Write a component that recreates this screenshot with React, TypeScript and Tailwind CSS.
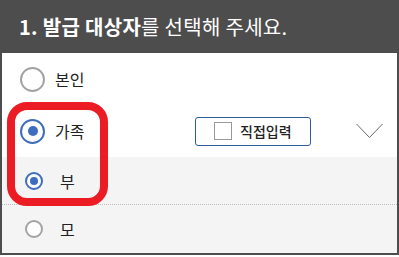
import { ReactNode } from "react";

const font = { fontFamily: '"Noto Sans CJK KR", "Noto Sans", sans-serif' };

function Radio({ size, checked }: { size: "lg" | "sm"; checked: boolean }) {
  const box = size === "lg" ? "w-[25px] h-[25px]" : "w-[18px] h-[18px]";
  const dot = size === "lg" ? "w-[10px] h-[10px]" : "w-[8px] h-[8px]";
  return (
    <span
      className={`${box} shrink-0 rounded-full border-2 bg-white flex items-center justify-center ${
        checked ? "border-[#3d6dbd]" : "border-[#a3a3a3]"
      }`}
    >
      {checked && <span className={`${dot} rounded-full bg-[#3d6dbd]`} />}
    </span>
  );
}

function SubRow({ label, checked, children }: { label: string; checked: boolean; children?: ReactNode }) {
  return (
    <div className="h-[47px] flex items-center pl-[23px] gap-[17px]">
      <Radio size="sm" checked={checked} />
      <span className="text-[16px] text-[#222]">{label}</span>
      {children}
    </div>
  );
}

export default function App() {
  return (
    <div className="w-[399px] h-[257px] bg-white relative" style={font}>
      <div className="w-[399px] border-2 border-[#4d4d4d] border-t-0">
        {/* Header */}
        <div className="h-[53px] bg-[#4d4d4d] flex items-center pl-[17px] text-white text-[20px] tracking-[0.3px]">
          <span className="font-bold">1. 발급 대상자</span>
          <span>를 선택해 주세요.</span>
        </div>

        {/* 본인 */}
        <div className="h-[52px] flex items-center pl-[18px] gap-[10px]">
          <Radio size="lg" checked={false} />
          <span className="text-[16px] text-[#222]">본인</span>
        </div>

        {/* 가족 */}
        <div className="h-[52px] flex items-center pl-[18px]">
          <div className="w-[175px] flex items-center gap-[10px]">
            <Radio size="lg" checked={true} />
            <span className="text-[16px] text-[#222]">가족</span>
          </div>
          <button className="w-[116px] h-[29px] border-[1.5px] border-[#2e5d9c] rounded-[3px] bg-white flex items-center pl-[18px] gap-[8px]">
            <span className="w-[18px] h-[18px] border border-[#999] bg-white" />
            <span className="text-[14px] font-medium text-[#222]">직접입력</span>
          </button>
          <svg className="ml-[45px]" width="27" height="16" viewBox="0 0 27 16">
            <polyline points="0.5,1 13.5,14.5 26.5,1" fill="none" stroke="#6b6b6b" strokeWidth="1" />
          </svg>
        </div>

        {/* 하위 선택 */}
        <div className="bg-[#f4f4f4]">
          <SubRow label="부" checked={true} />
          <div className="border-t border-dotted border-[#bdbdbd]" />
          <div className="h-[48px] flex items-center pl-[23px] gap-[17px]">
            <Radio size="sm" checked={false} />
            <span className="text-[16px] text-[#222]">모</span>
          </div>
        </div>
      </div>

      {/* 강조 표시 */}
      <div className="absolute left-[7px] top-[102px] w-[101px] h-[104px] border-[8px] border-[#ec1c24] rounded-[20px]" />
    </div>
  );
}
